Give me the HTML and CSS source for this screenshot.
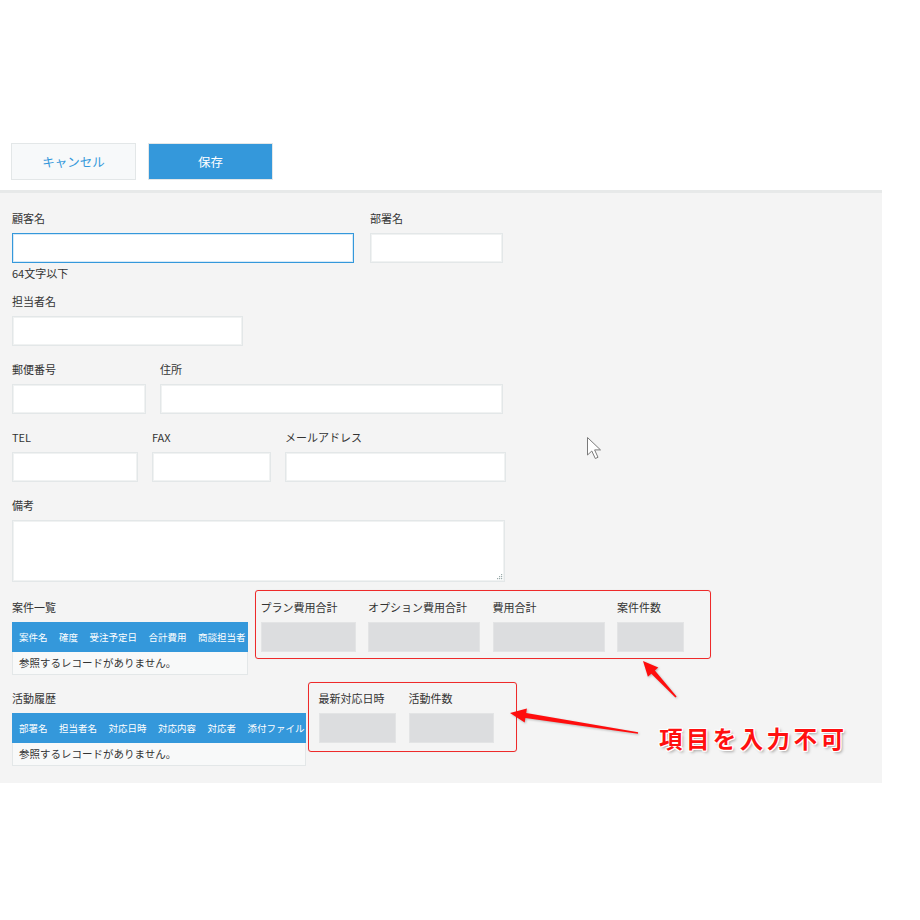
FILE: index.html
```html
<!DOCTYPE html>
<html lang="ja">
<head>
<meta charset="utf-8">
<title>フォーム</title>
<link rel="stylesheet" href="styles.css">
</head>
<body>
<div class="page">
  <div class="toolbar">
    <button class="btn btn-cancel">キャンセル</button>
    <button class="btn btn-save">保存</button>
  </div>

  <div class="form">
    <div class="row r1">
      <div class="field">
        <div class="label">顧客名</div>
        <div class="input focus w342"></div>
        <div class="hint">64文字以下</div>
      </div>
      <div class="field">
        <div class="label">部署名</div>
        <div class="input w133"></div>
      </div>
    </div>

    <div class="row r2">
      <div class="field">
        <div class="label">担当者名</div>
        <div class="input w231"></div>
      </div>
    </div>

    <div class="row r3">
      <div class="field">
        <div class="label">郵便番号</div>
        <div class="input w134"></div>
      </div>
      <div class="field">
        <div class="label">住所</div>
        <div class="input w343"></div>
      </div>
    </div>

    <div class="row r4">
      <div class="field">
        <div class="label">TEL</div>
        <div class="input w126"></div>
      </div>
      <div class="field">
        <div class="label">FAX</div>
        <div class="input w119"></div>
      </div>
      <div class="field">
        <div class="label">メールアドレス</div>
        <div class="input w221"></div>
      </div>
    </div>

    <div class="row r5">
      <div class="field">
        <div class="label">備考</div>
        <div class="textarea">
          <svg class="grip" width="6" height="6" viewBox="0 0 6 6">
            <rect x="4" y="0" width="1.2" height="1.2" fill="#9aa"/>
            <rect x="2" y="2" width="1.2" height="1.2" fill="#9aa"/>
            <rect x="4" y="2" width="1.2" height="1.2" fill="#9aa"/>
            <rect x="0" y="4" width="1.2" height="1.2" fill="#9aa"/>
            <rect x="2" y="4" width="1.2" height="1.2" fill="#9aa"/>
            <rect x="4" y="4" width="1.2" height="1.2" fill="#9aa"/>
          </svg>
        </div>
      </div>
    </div>

    <div class="row r6">
      <div class="field">
        <div class="label">案件一覧</div>
        <div class="table t1">
          <div class="thead">
            <span>案件名</span><span>確度</span><span>受注予定日</span><span>合計費用</span><span>商談担当者</span>
          </div>
          <div class="tbody">参照するレコードがありません。</div>
        </div>
      </div>
      <div class="redbox box1">
        <div class="field">
          <div class="label">プラン費用合計</div>
          <div class="calc w95"></div>
        </div>
        <div class="field">
          <div class="label">オプション費用合計</div>
          <div class="calc w112"></div>
        </div>
        <div class="field">
          <div class="label">費用合計</div>
          <div class="calc w112"></div>
        </div>
        <div class="field">
          <div class="label">案件件数</div>
          <div class="calc w67"></div>
        </div>
      </div>
    </div>

    <div class="row r7">
      <div class="field">
        <div class="label">活動履歴</div>
        <div class="table t2">
          <div class="thead">
            <span>部署名</span><span>担当者名</span><span>対応日時</span><span>対応内容</span><span>対応者</span><span>添付ファイル</span>
          </div>
          <div class="tbody">参照するレコードがありません。</div>
        </div>
      </div>
      <div class="redbox box2">
        <div class="field">
          <div class="label">最新対応日時</div>
          <div class="calc w77"></div>
        </div>
        <div class="field">
          <div class="label">活動件数</div>
          <div class="calc w85"></div>
        </div>
      </div>
    </div>
  </div>

  <svg class="overlay" width="920" height="920" viewBox="0 0 920 920">
    <g class="arrows">
      <polygon points="643,661 658.3,667.4 654.9,670.4 676.6,696.5 675.4,697.5 651.3,673.8 647.9,676.8"/>
      <polygon points="510,713 526.9,708.6 526.2,713.0 638.1,732.2 637.9,733.8 525.4,718.0 524.7,722.4"/>
    </g>
    <path class="cursor" d="M587.5 437.5 L587.5 455 L591.8 451 L595.3 458.5 L598 457.3 L594.6 449.9 L600.5 449.9 Z"/>
  </svg>
  <div class="annot">項目を入力不可</div>
</div>
</body>
</html>
```

FILE: styles.css
```css
html, body {
  margin: 0;
  padding: 0;
  background: #ffffff;
}

body {
  font-family: "Noto Sans CJK JP", "Noto Sans", sans-serif;
  color: #333333;
}

.page {
  position: relative;
  width: 920px;
  height: 920px;
}

.toolbar {
  display: flex;
  gap: 12px;
  padding: 143px 0 0 11px;
  height: 47px;
}

.btn {
  box-sizing: border-box;
  height: 37px;
  border: 1px solid #e3e7e8;
  font-family: "Noto Sans CJK JP", sans-serif;
  font-size: 12.5px;
  padding: 0;
  cursor: pointer;
}

.btn-cancel {
  width: 125px;
  background: #f7f9fa;
  color: #3498db;
}

.btn-save {
  width: 125px;
  background: #3498db;
  color: #ffffff;
}

.form {
  width: 882px;
  box-sizing: border-box;
  background: #f4f4f4;
  border-top: 3px solid #e7e9e9;
  padding: 0 0 17px 12px;
}

.row {
  display: flex;
  align-items: flex-start;
}

.r1 { margin-top: 17px; gap: 16px; }
.r2 { margin-top: 12px; }
.r3 { margin-top: 15px; gap: 14px; }
.r4 { margin-top: 15px; gap: 14px; }
.r5 { margin-top: 15px; }
.r6 { margin-top: 17px; gap: 7px; }
.r7 { margin-top: 15px; gap: 2px; }

.field {
  display: flex;
  flex-direction: column;
}

.label {
  font-size: 11px;
  line-height: 17px;
  height: 16px;
  color: #333333;
  white-space: nowrap;
  margin-bottom: 7px;
}

.hint {
  font-size: 11px;
  line-height: 16px;
  margin-top: 2px;
  color: #333333;
}

.input {
  box-sizing: border-box;
  height: 30px;
  background: #ffffff;
  border: 1px solid #e3e7e8;
  box-shadow: inset 0 0 0 1px #f0f2f2;
}

.input.focus {
  border: 1px solid #3498db;
  box-shadow: inset 0 0 0 1px #d6e9f7;
}

.w342 { width: 342px; }
.w133 { width: 133px; }
.w231 { width: 231px; }
.w134 { width: 134px; }
.w343 { width: 343px; }
.w126 { width: 126px; }
.w119 { width: 119px; }
.w221 { width: 221px; }
.w95 { width: 95px; }
.w112 { width: 112px; }
.w67 { width: 67px; }
.w77 { width: 77px; }
.w85 { width: 85px; }

.textarea {
  position: relative;
  box-sizing: border-box;
  width: 493px;
  height: 62px;
  background: #ffffff;
  border: 1px solid #e3e7e8;
  box-shadow: inset 0 0 0 1px #f0f2f2;
}

.grip {
  position: absolute;
  right: 1px;
  bottom: 1px;
}

.table {
  box-sizing: border-box;
}

.t1 { width: 236px; }
.t2 { width: 294px; }

.thead {
  display: flex;
  gap: 11.5px;
  align-items: center;
  height: 30px;
  background: #3498db;
  color: #ffffff;
  font-size: 9.5px;
  padding-left: 7px;
  white-space: nowrap;
  overflow: hidden;
}

.tbody {
  box-sizing: border-box;
  height: 23px;
  background: #f8f9f9;
  border: 1px solid #e3e7e8;
  border-top: none;
  font-size: 10.5px;
  line-height: 21px;
  padding-left: 6px;
  color: #333333;
  white-space: nowrap;
}

.redbox {
  display: flex;
  box-sizing: border-box;
  border: 1.5px solid #ee2a2a;
  border-radius: 3px;
  box-shadow: 0 0 1px rgba(0, 0, 0, 0.15);
}

.box1 {
  width: 456px;
  margin-top: -9px;
  padding: 7.5px 0 6px 4.5px;
  gap: 12.5px;
}

.box2 {
  width: 209px;
  margin-top: -8px;
  padding: 6.5px 0 8px 9.5px;
  gap: 13px;
}

.calc {
  box-sizing: border-box;
  height: 30px;
  background: #dcdddf;
  border: 1px solid #e3e4e5;
}

.overlay {
  position: absolute;
  left: 0;
  top: 0;
  pointer-events: none;
}

.arrows {
  fill: #ff0d0d;
  filter: drop-shadow(1px 1px 1px rgba(0, 0, 0, 0.25));
}

.cursor {
  fill: #ffffff;
  stroke: #7a7a7a;
  stroke-width: 1;
  stroke-linejoin: miter;
}

.annot {
  position: absolute;
  left: 659px;
  top: 722px;
  font-family: "Noto Sans CJK JP", sans-serif;
  font-size: 23.5px;
  font-weight: 700;
  letter-spacing: 3.4px;
  line-height: 32px;
  color: #ff1010;
  white-space: nowrap;
  text-shadow:
    1px 0 0 #fff, -1px 0 0 #fff, 0 1px 0 #fff, 0 -1px 0 #fff,
    1px 1px 0 #fff, -1px -1px 0 #fff, 1px -1px 0 #fff, -1px 1px 0 #fff,
    2px 2px 3px rgba(0, 0, 0, 0.35);
}
```
